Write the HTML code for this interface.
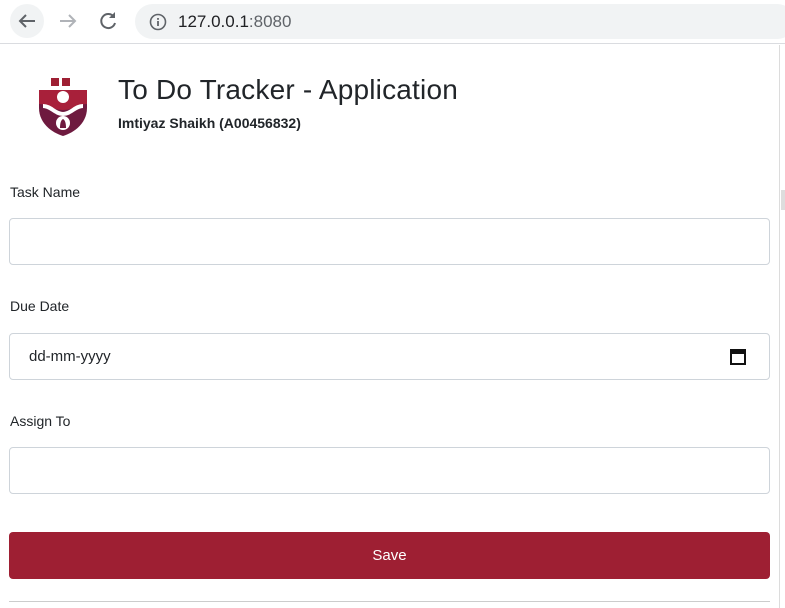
<!DOCTYPE html>
<html><head><meta charset="utf-8"><style>
*{box-sizing:border-box;margin:0;padding:0}
body{width:785px;height:608px;overflow:hidden;background:#fff;font-family:"Liberation Sans",sans-serif;position:relative}
.bar{position:absolute;left:0;top:0;width:785px;height:44px;background:#fff;border-bottom:1px solid #dadce0}
.url{position:absolute;left:135px;top:4px;width:660px;height:35px;border-radius:18px;background:#f1f3f4}
.url span{position:absolute;left:43px;top:8px;font-size:17px;color:#202124}
.url span i{font-style:normal;color:#5f6368}
.sb{position:absolute;left:779px;top:45px;width:6px;height:563px;background:#fff;border-left:1px solid #dcdcdc}
.lbl{position:absolute;left:10px;font-size:14px;color:#212529}
.inp{position:absolute;left:9px;width:761px;height:47px;border:1px solid #ced4da;border-radius:4px;background:#fff}
.btn{position:absolute;left:9px;top:532px;width:761px;height:47px;background:#9e1f33;border-radius:4px;color:#fff;font-size:15px;text-align:center;line-height:47px}
</style></head><body>
<div class="bar">
<svg style="position:absolute;left:10px;top:4px" width="34" height="34" viewBox="0 0 34 34"><circle cx="17" cy="17" r="17" fill="#f1f3f4"/><path d="M25 17H10M16 11l-6 6 6 6" stroke="#5f6368" stroke-width="2" fill="none"/></svg>
<svg style="position:absolute;left:56px;top:8px" width="24" height="26" viewBox="0 0 24 26"><path d="M4 13h15M13 7l6 6-6 6" stroke="#b0b3b8" stroke-width="2" fill="none"/></svg>
<svg style="position:absolute;left:96px;top:9px" width="24" height="24" viewBox="0 0 24 24"><path d="M18 8A7 7 0 1 0 19 14" stroke="#5f6368" stroke-width="2" fill="none"/><path d="M19 3v6h-6z" fill="#5f6368"/></svg>
<div class="url">
<svg style="position:absolute;left:14px;top:9px" width="18" height="18" viewBox="0 0 18 18"><circle cx="9" cy="9" r="7.5" stroke="#5f6368" stroke-width="1.6" fill="none"/><rect x="8.1" y="8" width="1.8" height="5" fill="#5f6368"/><rect x="8.1" y="5" width="1.8" height="1.8" fill="#5f6368"/></svg>
<span>127.0.0.1<i>:8080</i></span></div>
</div>
<div class="sb"></div>
<div style="position:absolute;left:781px;top:190px;width:4px;height:20px;background:#ddd"></div>
<svg style="position:absolute;left:37px;top:78px" width="52" height="60" viewBox="0 0 52 60">
<rect x="14" y="0" width="8" height="8" fill="#9e1f33"/><rect x="25" y="0" width="8" height="8" fill="#9e1f33"/>
<path d="M2 12h48v18c0 14-11 24-24 28C13 54 2 44 2 30z" fill="#6e1a3f"/>
<path d="M2 12h48v14c-8 0-14 6-24 6S10 26 2 26z" fill="#a8203a"/>
<circle cx="26" cy="19" r="6" fill="#fff"/>
<path d="M6 28c8 0 12 8 20 8s12-8 20-8" stroke="#fff" stroke-width="4" fill="none"/>
<circle cx="26" cy="45" r="7" fill="#fff"/><path d="M23 50c0-5 1-8 3-9 2 1 3 4 3 9z" fill="#6e1a3f"/>
</svg>
<div style="position:absolute;left:118px;top:74px;font-size:28px;letter-spacing:0.2px;color:#212529">To Do Tracker - Application</div>
<div style="position:absolute;left:118px;top:115px;font-size:14px;font-weight:bold;color:#212529">Imtiyaz Shaikh (A00456832)</div>
<div class="lbl" style="top:184px">Task Name</div>
<div class="inp" style="top:218px"></div>
<div class="lbl" style="top:298px">Due Date</div>
<div class="inp" style="top:333px"><span style="position:absolute;left:19px;top:14px;font-size:15px;color:#212529">dd-mm-yyyy</span>
<svg style="position:absolute;left:720px;top:14px" width="16" height="17" viewBox="0 0 16 17"><rect x="1" y="2" width="14" height="14" fill="none" stroke="#111" stroke-width="2"/><rect x="1" y="2" width="14" height="4" fill="#111"/></svg></div>
<div class="lbl" style="top:413px">Assign To</div>
<div class="inp" style="top:447px"></div>
<div class="btn">Save</div>
<div style="position:absolute;left:9px;top:601px;width:761px;height:1px;background:#ccc"></div>
</body></html>
